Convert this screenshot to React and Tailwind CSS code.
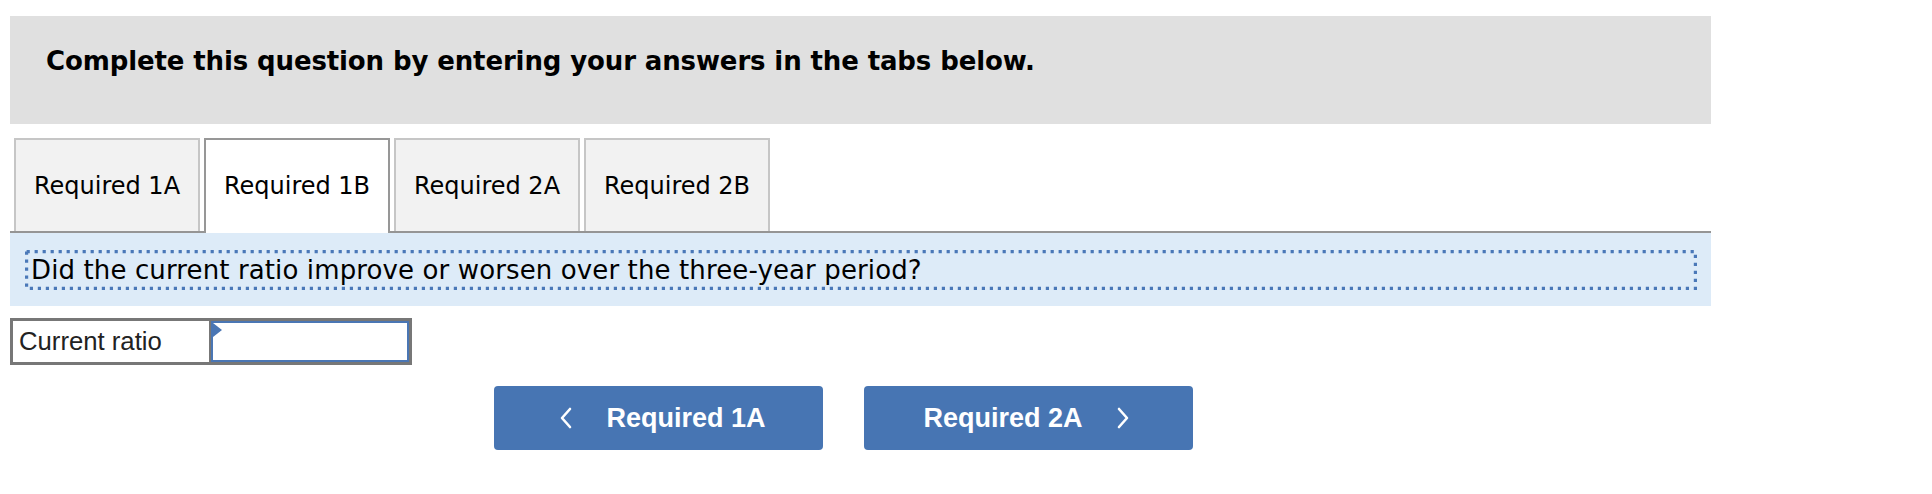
import React from 'react';

const tabs = ['Required 1A', 'Required 1B', 'Required 2A', 'Required 2B'];

const Chevron = ({ dir }) => (
  <svg width="14" height="22" viewBox="0 0 14 22" fill="none">
    <polyline
      points={dir === 'left' ? '11,2 3,11 11,20' : '3,2 11,11 3,20'}
      stroke="white"
      strokeWidth="2.6"
      strokeLinecap="round"
      strokeLinejoin="round"
    />
  </svg>
);

const App = () => {
  const active = 1;

  return (
    <div className="w-[1932px] h-[494px] bg-white pt-[16px] pl-[10px]">
      <div className="w-[1701px]">
        {/* Instructions */}
        <div className="h-[108px] bg-[#e0e0e0] pl-[36px] pt-[30px]">
          <h2 className="font-['DejaVu_Sans',sans-serif] text-[26px] leading-[30px] tracking-[-0.12px] font-bold text-black">
            Complete this question by entering your answers in the tabs below.
          </h2>
        </div>

        {/* Tabs */}
        <div className="mt-[14px] flex items-end gap-[4px] pl-[4px] border-b-2 border-[#959595]">
          {tabs.map((t, i) =>
            i === active ? (
              <div
                key={t}
                className="-mb-[2px] h-[95px] w-[186px] flex items-center justify-center border-2 border-b-0 border-[#979797] bg-white font-['DejaVu_Sans',sans-serif] text-[24px] text-black pb-[2px]"
              >
                {t}
              </div>
            ) : (
              <div
                key={t}
                className="h-[93px] w-[186px] flex items-center justify-center border-2 border-b-0 border-[#c6c6c6] bg-[#f2f2f2] font-['DejaVu_Sans',sans-serif] text-[24px] text-black"
              >
                {t}
              </div>
            )
          )}
        </div>

        {/* Question */}
        <div className="h-[73px] bg-[#ddebf8] pt-[17px] pl-[15px] pr-[14px]">
          <div className="relative h-[40px] flex items-center pl-[6px]">
            <svg className="absolute inset-0" width="1672" height="40" viewBox="0 0 1672 40" fill="none">
              <rect
                x="1.6"
                y="1.6"
                width="1668.8"
                height="36.8"
                stroke="#4a78b8"
                strokeWidth="3.2"
                strokeDasharray="3.2 4.8"
              />
            </svg>
            <p className="relative font-['DejaVu_Sans',sans-serif] text-[26px] leading-[30px] tracking-[0.12px] text-black">
              Did the current ratio improve or worsen over the three-year period?
            </p>
          </div>
        </div>

        {/* Answer row */}
        <div className="mt-[12px] flex w-[402px] h-[47px] border-[3px] border-[#777]">
          <div className="w-[198px] flex items-center pl-[6px] border-r-[2px] border-[#777] font-['Liberation_Sans',Arial,sans-serif] text-[25.7px] text-[#222]">
            Current ratio
          </div>
          <div className="relative flex-1 border-[2px] border-[#4a76b4] bg-white">
            <span className="absolute left-[0px] top-[0px] w-0 h-0 border-y-[7px] border-y-transparent border-l-[9px] border-l-[#4a76b4]" />
          </div>
        </div>

        {/* Navigation */}
        <div className="mt-[21px] flex gap-[41px] pl-[484px]">
          <button className="w-[329px] h-[64px] rounded-[4px] bg-[#4775b3] flex items-center justify-center gap-[33px] pl-[8px] font-['Liberation_Sans',Arial,sans-serif] text-[27px] font-bold text-white">
            <Chevron dir="left" />
            <span>Required 1A</span>
          </button>
          <button className="w-[329px] h-[64px] rounded-[4px] bg-[#4775b3] flex items-center justify-center gap-[33px] pr-[4px] font-['Liberation_Sans',Arial,sans-serif] text-[27px] font-bold text-white">
            <span>Required 2A</span>
            <Chevron dir="right" />
          </button>
        </div>
      </div>
    </div>
  );
};

export default App;
